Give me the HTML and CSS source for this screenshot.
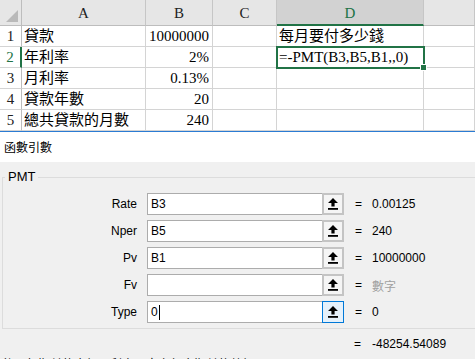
FILE: index.html
```html
<!DOCTYPE html>
<html lang="zh-Hant">
<head>
    <meta charset="UTF-8">
    <meta name="viewport" content="width=device-width, initial-scale=1.0">
    <title>函數引數 - PMT</title>
    <link rel="stylesheet" href="styles.css">
</head>
<body>
    <div class="sheet">
        <div class="corner"></div>
        <div class="ch">A</div>
        <div class="ch">B</div>
        <div class="ch">C</div>
        <div class="ch ch-active">D</div>
        <div class="ch"></div>

        <div class="rh">1</div>
        <div class="c">貸款</div>
        <div class="c num">10000000</div>
        <div class="c"></div>
        <div class="c">每月要付多少錢</div>
        <div class="c"></div>

        <div class="rh rh-active">2</div>
        <div class="c">年利率</div>
        <div class="c num">2%</div>
        <div class="c"></div>
        <div class="c sel">=-PMT(B3,B5,B1,,0)<span class="handle"></span></div>
        <div class="c"></div>

        <div class="rh">3</div>
        <div class="c">月利率</div>
        <div class="c num">0.13%</div>
        <div class="c"></div>
        <div class="c"></div>
        <div class="c"></div>

        <div class="rh">4</div>
        <div class="c">貸款年數</div>
        <div class="c num">20</div>
        <div class="c"></div>
        <div class="c"></div>
        <div class="c"></div>

        <div class="rh">5</div>
        <div class="c">總共貸款的月數</div>
        <div class="c num">240</div>
        <div class="c"></div>
        <div class="c"></div>
        <div class="c"></div>
    </div>

    <div class="dialog">
        <div class="dlg-title">函數引數</div>
        <div class="dlg-body">
            <fieldset class="group">
                <legend>PMT</legend>
                <div class="args">
                    <label>Rate</label>
                    <div class="field"><span class="val">B3</span><span class="ref-btn"><svg width="10" height="12" viewBox="0 0 10 12"><path d="M5 0 L10 5 L6.6 5 L6.6 8.6 L3.4 8.6 L3.4 5 L0 5 Z" fill="#000"/><rect x="0" y="10" width="10" height="1.8" fill="#000"/></svg></span></div>
                    <span class="eq">=</span>
                    <span class="res">0.00125</span>

                    <label>Nper</label>
                    <div class="field"><span class="val">B5</span><span class="ref-btn"><svg width="10" height="12" viewBox="0 0 10 12"><path d="M5 0 L10 5 L6.6 5 L6.6 8.6 L3.4 8.6 L3.4 5 L0 5 Z" fill="#000"/><rect x="0" y="10" width="10" height="1.8" fill="#000"/></svg></span></div>
                    <span class="eq">=</span>
                    <span class="res">240</span>

                    <label>Pv</label>
                    <div class="field"><span class="val">B1</span><span class="ref-btn"><svg width="10" height="12" viewBox="0 0 10 12"><path d="M5 0 L10 5 L6.6 5 L6.6 8.6 L3.4 8.6 L3.4 5 L0 5 Z" fill="#000"/><rect x="0" y="10" width="10" height="1.8" fill="#000"/></svg></span></div>
                    <span class="eq">=</span>
                    <span class="res">10000000</span>

                    <label>Fv</label>
                    <div class="field"><span class="val"></span><span class="ref-btn"><svg width="10" height="12" viewBox="0 0 10 12"><path d="M5 0 L10 5 L6.6 5 L6.6 8.6 L3.4 8.6 L3.4 5 L0 5 Z" fill="#000"/><rect x="0" y="10" width="10" height="1.8" fill="#000"/></svg></span></div>
                    <span class="eq">=</span>
                    <span class="res hint">數字</span>

                    <label>Type</label>
                    <div class="field"><span class="val">0<span class="caret"></span></span><span class="ref-btn ref-hover"><svg width="10" height="12" viewBox="0 0 10 12"><path d="M5 0 L10 5 L6.6 5 L6.6 8.6 L3.4 8.6 L3.4 5 L0 5 Z" fill="#000"/><rect x="0" y="10" width="10" height="1.8" fill="#000"/></svg></span></div>
                    <span class="eq">=</span>
                    <span class="res">0</span>
                </div>
            </fieldset>
            <div class="total">
                <span class="eq">=</span>
                <span class="res">-48254.54089</span>
            </div>
            <p class="desc">傳回每期付款金額及利率固定之年金期付款數額。</p>
        </div>
    </div>
</body>
</html>
```

FILE: styles.css
```css
body {
    margin: 0;
    width: 475px;
    height: 359px;
    overflow: hidden;
    background: #f0f0f0;
}

/* spreadsheet part */
.sheet {
    display: grid;
    grid-template-columns: 22px 124px 67px 64px 147px 1fr;
    grid-template-rows: 26px repeat(5, 21px);
    background: #fff;
    font-family: "Liberation Serif", "Noto Sans CJK TC", serif;
    font-size: 15px;
    color: #000;
}
.corner {
    background: #e6e6e6;
    border-right: 1px solid #bdbdbd;
    border-bottom: 1px solid #bdbdbd;
    position: relative;
}
.corner::after {
    content: "";
    position: absolute;
    right: 3px;
    bottom: 3px;
    border-left: 12px solid transparent;
    border-bottom: 12px solid #b9b9b9;
}
.ch {
    background: #e6e6e6;
    border-right: 1px solid #c6c6c6;
    border-bottom: 1px solid #bdbdbd;
    text-align: center;
    line-height: 26px;
    color: #222;
}
.ch-active {
    background: #d2d2d2;
    color: #217346;
    border-bottom: 2px solid #217346;
}
.rh {
    background: #fff;
    border-right: 1px solid #bdbdbd;
    border-bottom: 1px solid #d4d4d4;
    text-align: center;
    line-height: 20px;
    color: #222;
}
.rh-active {
    color: #217346;
    border-right: 2px solid #217346;
}
.c {
    border-right: 1px solid #d4d4d4;
    border-bottom: 1px solid #d4d4d4;
    line-height: 20px;
    padding-left: 2px;
    white-space: nowrap;
    overflow: hidden;
}
.num {
    text-align: right;
    padding-right: 3px;
}
.sel {
    position: relative;
    overflow: visible;
    z-index: 1;
    outline: 2px solid #217346;
    outline-offset: -1px;
}
.handle {
    position: absolute;
    right: -4px;
    bottom: -4px;
    width: 5px;
    height: 5px;
    background: #217346;
    border: 1px solid #fff;
}

/* dialog part */
.dialog {
    border-top: 1px solid #2b7bd3;
    font-family: "Liberation Sans", "Noto Sans CJK TC", sans-serif;
    font-size: 12px;
    color: #000;
}
.dlg-title {
    height: 30px;
    line-height: 30px;
    padding-left: 4px;
    background: #fff;
    font-family: "Noto Sans CJK TC", sans-serif;
}
.dlg-body {
    background: #f0f0f0;
    padding-top: 7px;
}
.group {
    margin: 0 -20px 0 2px;
    padding: 8px 0 5px 0;
    border: 1px solid #dcdcdc;
}
.group legend {
    font-size: 13px;
    line-height: 16px;
    padding: 0 3px;
    margin-left: 2px;
}
.args {
    display: grid;
    grid-template-columns: 144px 197px 28px 1fr;
    grid-auto-rows: 22px;
    row-gap: 5px;
    align-items: center;
}
.args label {
    text-align: right;
    padding-right: 10px;
}
.field {
    height: 22px;
    box-sizing: border-box;
    border: 1px solid #acacac;
    background: #fff;
    display: flex;
    align-items: center;
}
.val {
    flex: 1;
    padding-left: 3px;
    display: flex;
    align-items: center;
}
.caret {
    display: inline-block;
    width: 1px;
    height: 15px;
    background: #000;
    margin-left: 1px;
}
.ref-btn {
    box-sizing: border-box;
    width: 22px;
    height: 22px;
    margin: -1px -1px -1px 0;
    border: 2px solid #c4c4c4;
    background: #f5f5f5;
    display: flex;
    align-items: center;
    justify-content: center;
}
.ref-hover {
    border: 1px solid #0078d7;
    background: #e5f1fb;
}
.eq {
    padding-left: 11px;
}
.hint {
    color: #a0a0a0;
    font-family: "Noto Sans CJK TC", sans-serif;
}
.total {
    display: grid;
    grid-template-columns: 343px 29px 1fr;
    line-height: 16px;
    margin-top: 7px;
}
.total .eq {
    grid-column: 2;
}
.desc {
    margin: 4px 0 0 0;
    padding-left: 2px;
    line-height: 16px;
    font-family: "Noto Sans CJK TC", sans-serif;
    white-space: nowrap;
}
```
